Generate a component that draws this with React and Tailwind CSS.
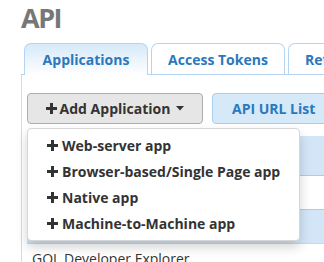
import React from "react";

function Plus() {
  return (
    <svg width="11" height="11" viewBox="0 0 11 11" className="shrink-0" aria-hidden="true">
      <rect x="4" y="0" width="3" height="11" fill="#333" />
      <rect x="0" y="4" width="11" height="3" fill="#333" />
    </svg>
  );
}

export default function App() {
  const items = [
    "Web-server app",
    "Browser-based/Single Page app",
    "Native app",
    "Machine-to-Machine app",
  ];
  return (
    <div className="relative w-[324px] h-[262px] overflow-hidden bg-white font-['Open_Sans',sans-serif] text-[#333]">
      <h1 className="pl-[21px] pt-[1px] h-[43px] text-[27px] leading-[34px] font-bold tracking-[-1.5px] text-[#777]">
        API
      </h1>
      <div className="ml-[21px] flex gap-[3px] pl-[3px] border-b border-[#b3d5f2] h-[32px] whitespace-nowrap">
        <div className="-mb-px w-[124px] h-[32px] shrink-0 rounded-t-[7px] border border-b-0 border-[#b3d5f2] bg-gradient-to-b from-[#d6e9f9] to-white flex items-center justify-center text-[14px] font-bold text-[#2a78bd]">
          Applications
        </div>
        <div className="w-[134px] h-[31px] shrink-0 rounded-t-[7px] border border-b-0 border-[#b3d5f2] bg-white flex items-center justify-center text-[14px] font-bold text-[#2a78bd]">
          Access Tokens
        </div>
        <div className="w-[80px] h-[31px] shrink-0 rounded-t-[7px] border border-b-0 border-[#b3d5f2] bg-white flex items-center pl-[16px] text-[14px] font-bold text-[#2a78bd]">
          Refresh
        </div>
      </div>
      <div className="ml-[21px] border-l border-[#c9dff0] h-[200px] pt-[18px] pl-[5px]">
        <div className="flex gap-[9px] whitespace-nowrap">
          <div className="w-[176px] h-[31px] shrink-0 rounded-[4px] border border-[#adadad] bg-[#e6e6e6] flex items-center justify-center gap-[3px] text-[14px] font-bold">
            <Plus />
            <span>Add Application</span>
            <svg width="8" height="5" viewBox="0 0 8 5" className="ml-[3px]">
              <path d="M0 0 L8 0 L4 4.5 Z" fill="#333" />
            </svg>
          </div>
          <div className="w-[130px] h-[31px] shrink-0 rounded-[4px] border border-[#a8cff0] bg-[#d5e9f9] flex items-center pl-[19px] text-[14px] font-bold text-[#2a78bd]">
            API URL List
          </div>
        </div>
        <div className="mt-[12px] text-[14px]">
          <div className="h-[40px] bg-[#d3e6f7] border-b border-[#a9cdec]" />
          <div className="h-[34px] bg-white border-b border-[#a9cdec]" />
          <div className="h-[34px] bg-[#d3e6f7] border-b border-[#c9d9e6]" />
          <div className="h-[34px] bg-white pl-[5px] pt-[5px] leading-[20px]">GQL Developer Explorer</div>
        </div>
      </div>
      <div className="absolute left-[27px] top-[128px] w-[273px] h-[113px] rounded-[4px] border border-[#d6d6d6] bg-white shadow-[0_6px_12px_rgba(0,0,0,0.175)] pt-[3px]">
        {items.map((t) => (
          <div key={t} className="h-[26px] flex items-center gap-[4px] pl-[19px] text-[14px] font-bold text-[#333] whitespace-nowrap">
            <Plus />
            <span>{t}</span>
          </div>
        ))}
      </div>
    </div>
  );
}
